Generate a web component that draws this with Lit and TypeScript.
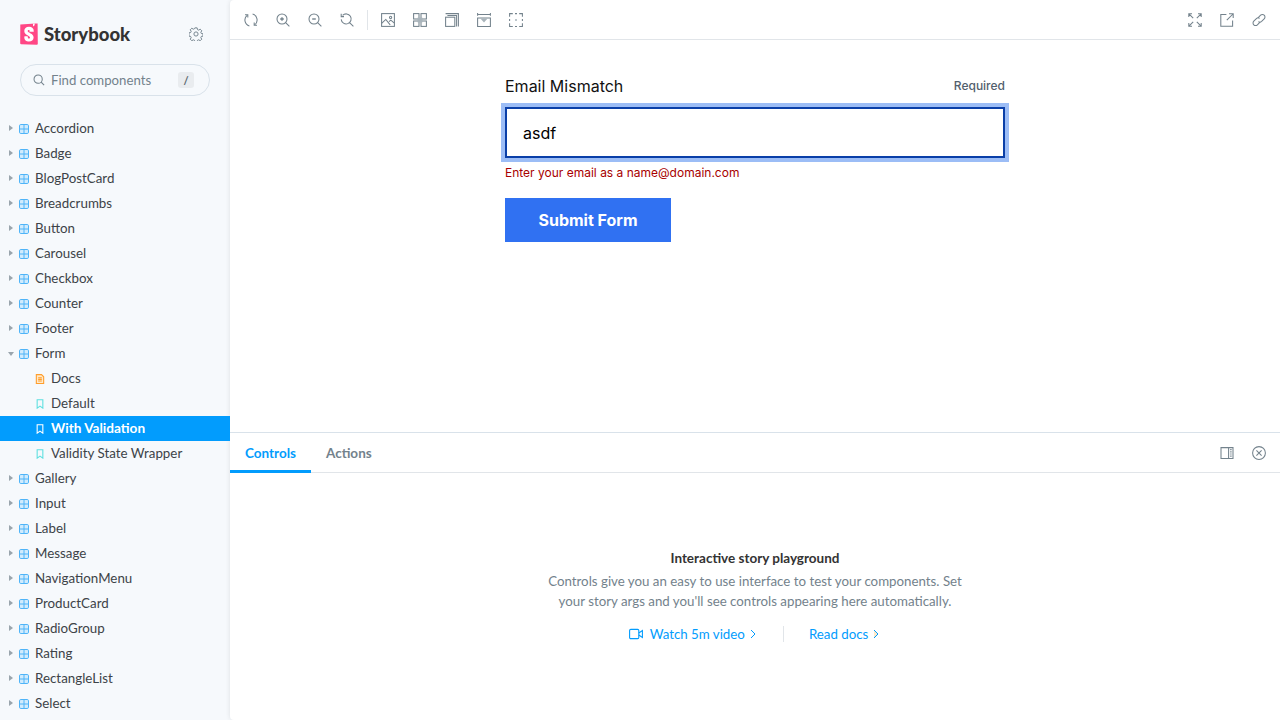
import { LitElement, css, html, svg } from 'lit'
import { customElement } from 'lit/decorators.js'

interface NavItem {
  label: string
  kind: 'component' | 'docs' | 'story'
  open?: boolean
  selected?: boolean
}

const NAV: NavItem[] = [
  { label: 'Accordion', kind: 'component' },
  { label: 'Badge', kind: 'component' },
  { label: 'BlogPostCard', kind: 'component' },
  { label: 'Breadcrumbs', kind: 'component' },
  { label: 'Button', kind: 'component' },
  { label: 'Carousel', kind: 'component' },
  { label: 'Checkbox', kind: 'component' },
  { label: 'Counter', kind: 'component' },
  { label: 'Footer', kind: 'component' },
  { label: 'Form', kind: 'component', open: true },
  { label: 'Docs', kind: 'docs' },
  { label: 'Default', kind: 'story' },
  { label: 'With Validation', kind: 'story', selected: true },
  { label: 'Validity State Wrapper', kind: 'story' },
  { label: 'Gallery', kind: 'component' },
  { label: 'Input', kind: 'component' },
  { label: 'Label', kind: 'component' },
  { label: 'Message', kind: 'component' },
  { label: 'NavigationMenu', kind: 'component' },
  { label: 'ProductCard', kind: 'component' },
  { label: 'RadioGroup', kind: 'component' },
  { label: 'Rating', kind: 'component' },
  { label: 'RectangleList', kind: 'component' },
  { label: 'Select', kind: 'component' },
]

// toolbar and panel icons, all on a 14 unit grid
const ICONS: Record<string, unknown> = {
  sync: svg`<path d="M5.400 12.900A6.100 6.100 0 0 1 3.400 2.100M8.600 1.100A6.100 6.100 0 0 1 10.600 11.900"/><path d="M1 1.800h2.800v2.800M13 12.200h-2.800V9.400"/>`,
  zoomIn: svg`<circle cx="6" cy="6" r="5"/><path d="M9.600 9.600 13.400 13.400"/><path stroke-width="1.400" d="M6 4.200v3.600M4.200 6h3.600"/>`,
  zoomOut: svg`<circle cx="6" cy="6" r="5"/><path d="M9.600 9.600 13.400 13.400"/><path stroke-width="1.400" d="M4.200 6h3.600"/>`,
  zoomReset: svg`<path d="M2.600 2.400A5 5 0 1 1 1.200 6.400M9.800 9.800 13.400 13.400"/><path d="M1.200 .8v2.800H4"/>`,
  image: svg`<rect x=".6" y=".6" width="12.800" height="12.800"/><circle cx="9.600" cy="4.400" r="1.100"/><path d="m.6 10.400 4.200-4 4.400 5.400M8 8.600l1.800-1.400 3.600 3"/>`,
  grid: svg`<rect x=".6" y=".6" width="5.400" height="5.400"/><rect x="8" y=".6" width="5.400" height="5.400"/><rect x=".6" y="8" width="5.400" height="5.400"/><rect x="8" y="8" width="5.400" height="5.400"/><rect class="solid" x="4.600" y="4.600" width="4.800" height="4.800"/>`,
  outline: svg`<rect x=".6" y="4.200" width="9.200" height="9.200"/><path d="M2.400 2.400H11.600V13.400M.6.600H13.400V13.400"/>`,
  measure: svg`<path d="M.6 1.400h12.800M.6 0v2.800M13.400 0v2.800M.6 5h12.800v8.400H.6z"/><path class="solid" d="M3.400 5.600h7.200L7 9.400z"/>`,
  frame: svg`<path d="M.6 3.800V.6h3.200M10.200 .6h3.200v3.200M13.400 10.200v3.200h-3.200M3.800 13.400H.6v-3.200M6 .6h2M6 13.400h2M.6 6v2M13.400 6v2"/><circle class="solid" cx="7" cy="7" r="1"/>`,
  expand: svg`<path d="M1.400 1.400 5.200 5.200M12.600 1.400 8.800 5.200M1.400 12.600 5.200 8.800M12.600 12.600 8.800 8.800M.8 4V.8H4M10 .8h3.200V4M.8 10v3.200H4M10 13.200h3.200V10"/>`,
  external: svg`<path d="M6.400 1.400H.8v11.800h11.800V7.600M6.800 7.200 13 1M9 .8h4.200V5"/>`,
  link: svg`<path d="M6 4.800 8.600 2.200a2.500 2.500 0 0 1 3.600 0 2.500 2.500 0 0 1 0 3.600L9.600 8.400a2.500 2.500 0 0 1-3.200.2"/><path d="M8 9.200 5.400 11.800a2.500 2.500 0 0 1-3.600 0 2.500 2.500 0 0 1 0-3.600l2.600-2.600a2.500 2.500 0 0 1 3.200-.2"/>`,
  sidebar: svg`<path d="M1 1.600h12v10.800H1zM8.600 1.600v10.800"/><path stroke-width="1.200" d="M10.200 3.600h1.400M10.200 5.800h1.400M10.200 8h1.400M10.200 10.200h1.400"/>`,
  close: svg`<circle cx="7" cy="7" r="6.400"/><path d="m4.400 4.400 5.200 5.200M9.600 4.400l-5.200 5.200"/>`,
}

const icon = (name: string) => html`<svg class="tool-icon" viewBox="0 0 14 14">${ICONS[name]}</svg>`

@customElement('app-root')
export class AppRoot extends LitElement {
  private _treeIcon(kind: NavItem['kind']) {
    if (kind === 'component') {
      return html`<svg class="node-icon component" viewBox="0 0 12 12">
        <rect x=".6" y=".6" width="10.800" height="10.800" rx="1.600" />
        <path d="M6 .6v10.800M.6 6h10.800" />
      </svg>`
    }
    if (kind === 'docs') {
      return html`<svg class="node-icon docs" viewBox="0 0 12 12">
        <path d="M1.600 .7h6.200l2.600 2.600v8H1.600z" />
        <path d="M3.800 4.400h4.400M3.800 6.400h4.400M3.800 8.400h4.400" />
      </svg>`
    }
    return html`<svg class="node-icon story" viewBox="0 0 12 12">
      <path d="M2.600 .8h6.800v10.200L6 8.600l-3.400 2.400z" />
    </svg>`
  }

  private _row(item: NavItem) {
    const child = item.kind !== 'component'
    return html`<div class="row ${child ? 'child' : ''} ${item.selected ? 'selected' : ''}">
      ${child ? '' : html`<span class="caret ${item.open ? 'open' : ''}"></span>`}
      ${this._treeIcon(item.kind)}
      <span class="row-label">${item.label}</span>
    </div>`
  }

  render() {
    return html`
      <aside class="sidebar">
        <div class="brand">
          <svg class="logo" viewBox="0 0 18 22">
            <path fill="#ff4785" d="M.3 1.400 15.600.4l2 0 .2 20.400a1 1 0 0 1-1 1L1.200 21.200a1 1 0 0 1-1-1z" />
            <path fill="#fff" d="M13 .7 13.100 3.400l1.500-1.100.1-1.700zM10.200 8.500c0 .5 3.200.3 3.600-.1 0-3-1.800-4.600-4.800-4.600-3 0-4.700 1.700-4.700 4.100 0 4.300 5.700 4.400 5.700 6.700 0 .7-.3 1-1 1-.9 0-1.200-.5-1.200-2.100 0-.4-3.200-.5-3.500 0-.2 3.900 2.100 5 4.700 5 2.500 0 4.600-1.300 4.600-3.900 0-4.400-5.900-4.300-5.900-6.500 0-.9.700-1 1-1 .5 0 1.100.1 1 2.500z" />
          </svg>
          <span class="wordmark">Storybook</span>
          <svg class="gear" viewBox="0 0 16 16">
            <circle cx="8" cy="8" r="2.400" />
            <path d="M6.700 1h2.600l.4 2 1.400.6 1.700-1.100 1.800 1.800-1.100 1.700.6 1.400 2 .4v2.600l-2 .4-.6 1.400 1.100 1.700-1.800 1.800-1.700-1.100-1.400.6-.4 2H6.700l-.4-2-1.400-.6-1.700 1.100-1.800-1.800 1.100-1.700-.6-1.400-2-.4V6.700l2-.4.6-1.400L1.400 3.200l1.800-1.800 1.700 1.100 1.400-.6z" />
          </svg>
        </div>
        <div class="search">
          <svg class="search-icon" viewBox="0 0 14 14">
            <circle cx="6" cy="6" r="4.800" />
            <path d="M9.500 9.500 13 13" />
          </svg>
          <span class="search-text">Find components</span>
          <span class="key">/</span>
        </div>
        <nav class="tree">${NAV.map((item) => this._row(item))}</nav>
      </aside>

      <main class="main">
        <header class="toolbar">
          <div class="tools">
            ${['sync', 'zoomIn', 'zoomOut', 'zoomReset'].map(icon)}
            <span class="divider"></span>
            ${['image', 'grid', 'outline', 'measure', 'frame'].map(icon)}
          </div>
          <div class="tools">${['expand', 'external', 'link'].map(icon)}</div>
        </header>

        <section class="canvas">
          <form class="story-form">
            <div class="field-head">
              <label>Email Mismatch</label>
              <span class="required">Required</span>
            </div>
            <div class="input">asdf</div>
            <div class="error">Enter your email as a name@domain.com</div>
            <div class="submit">Submit Form</div>
          </form>
        </section>

        <section class="panel">
          <div class="tabs">
            <span class="tab active">Controls</span>
            <span class="tab">Actions</span>
            <div class="tabs-right">${['sidebar', 'close'].map(icon)}</div>
          </div>
          <div class="empty">
            <strong>Interactive story playground</strong>
            <p>
              Controls give you an easy to use interface to test your components. Set<br />
              your story args and you'll see controls appearing here automatically.
            </p>
            <div class="links">
              <span class="link video">
                <svg class="video-icon" viewBox="0 0 14 12">
                  <rect x=".6" y="1.400" width="9.200" height="9.200" rx="1.200" />
                  <path d="m9.800 5 3.600-2.400v6.800L9.800 7" />
                </svg>
                Watch 5m video
                <svg class="chevron" viewBox="0 0 6 10"><path d="m1 1 4 4-4 4" /></svg>
              </span>
              <span class="links-sep"></span>
              <span class="link docs">
                Read docs
                <svg class="chevron" viewBox="0 0 6 10"><path d="m1 1 4 4-4 4" /></svg>
              </span>
            </div>
          </div>
        </section>
      </main>
    `
  }

  static styles = css`
    :host {
      display: grid;
      grid-template-columns: 230px 1fr;
      width: 1280px;
      height: 720px;
      overflow: hidden;
      background: #f6f9fc;
      font-family: Lato, 'Open Sans', sans-serif;
      color: #333;
    }

    .sidebar {
      display: flex;
      flex-direction: column;
      min-width: 0;
      overflow: hidden;
    }

    .brand {
      display: flex;
      align-items: center;
      height: 22px;
      margin: 23px 27px 0 20px;
    }

    .logo {
      width: 18px;
      height: 22px;
      flex: none;
    }

    .wordmark {
      margin-left: 6px;
      font-size: 18.500px;
      font-weight: 900;
      color: #333;
    }

    .gear {
      width: 14px;
      height: 14px;
      margin-left: auto;
      fill: none;
      stroke: #73828c;
      stroke-width: 1.100;
    }

    .search {
      display: flex;
      align-items: center;
      box-sizing: border-box;
      height: 32px;
      margin: 19px 20px 0;
      padding: 0 15px 0 12px;
      border: 1px solid #d9e2ea;
      border-radius: 16px;
    }

    .search-icon {
      width: 12px;
      height: 12px;
      fill: none;
      stroke: #73828c;
      stroke-width: 1.200;
    }

    .search-text {
      margin-left: 6px;
      font-size: 13.200px;
      color: #73828c;
    }

    .key {
      display: grid;
      place-items: center;
      width: 16px;
      height: 16px;
      margin-left: auto;
      border-radius: 3px;
      background: #e9ecef;
      font-size: 11px;
      font-weight: 700;
      color: #5c6870;
    }

    .tree {
      margin-top: 20px;
    }

    .row {
      display: flex;
      align-items: center;
      position: relative;
      height: 25px;
      padding-left: 19px;
      font-size: 13.350px;
      color: #3d4348;
    }

    .row.child {
      padding-left: 35px;
    }

    .row.selected {
      background: #029cfd;
      color: #fff;
      font-size: 13.600px;
      font-weight: 700;
    }

    .caret {
      position: absolute;
      left: 9px;
      top: 9px;
      width: 0;
      height: 0;
      border-style: solid;
      border-width: 3.500px 0 3.500px 4px;
      border-color: transparent transparent transparent #9aa5ad;
    }

    .caret.open {
      left: 8px;
      top: 11px;
      border-width: 4px 3.500px 0;
      border-color: #9aa5ad transparent transparent;
    }

    .node-icon {
      width: 10px;
      height: 10px;
      flex: none;
      fill: none;
    }

    .component {
      stroke: #4fb4f8;
      stroke-width: 1.200;
    }

    .component rect {
      fill: #d0ebfd;
    }

    .docs {
      stroke: #ff9e2c;
      stroke-width: 1.300;
    }

    .docs path:first-child {
      fill: #ffe9c9;
    }

    .story {
      stroke: #5fe0e0;
      stroke-width: 1.300;
    }

    .selected .story {
      stroke: #fff;
    }

    .row-label {
      margin-left: 6px;
      padding-bottom: 2px;
      white-space: nowrap;
    }

    .main {
      display: flex;
      flex-direction: column;
      min-width: 0;
      background: #fff;
      border-radius: 4px 0 0 4px;
      box-shadow: 0 0 5px rgba(0, 0, 0, 0.1);
    }

    .toolbar {
      display: flex;
      align-items: center;
      justify-content: space-between;
      box-sizing: border-box;
      flex: none;
      height: 40px;
      padding: 0 14px;
      border-bottom: 1px solid #e1e5e9;
    }

    .tools {
      display: flex;
      align-items: center;
      gap: 18px;
    }

    .tool-icon {
      width: 14px;
      height: 14px;
      flex: none;
      fill: none;
      stroke: #73828c;
      stroke-width: 1.050;
    }

    .tool-icon .solid {
      fill: #a9b4bb;
      stroke: none;
    }

    .divider {
      width: 1px;
      height: 20px;
      margin: 0 -5px;
      background: #e1e5e9;
    }

    .canvas {
      flex: none;
      display: flex;
      justify-content: center;
      height: 392px;
      font-family: Inter, sans-serif;
      color: #111;
    }

    .story-form {
      width: 500px;
      margin-top: 34px;
    }

    .field-head {
      display: flex;
      align-items: center;
      justify-content: space-between;
      height: 24px;
      font-size: 16px;
    }

    .required {
      margin-top: -2px;
      font-size: 12px;
      font-weight: 500;
      color: #52606d;
    }

    .input {
      box-sizing: border-box;
      display: flex;
      align-items: center;
      height: 51px;
      margin-top: 9px;
      padding-left: 16px;
      border: 2px solid #0a3fa8;
      outline: 4px solid #9cbdf6;
      background: #fff;
      font-size: 16px;
      color: #000;
    }

    .error {
      margin-top: 8px;
      font-size: 12px;
      line-height: 14px;
      color: #a80000;
    }

    .submit {
      display: grid;
      place-items: center;
      width: 166px;
      height: 44px;
      margin-top: 18px;
      background: #3071f2;
      color: #fff;
      font-size: 16px;
      font-weight: 700;
    }

    .panel {
      flex: 1;
      min-height: 0;
      border-top: 1px solid #d9e2ea;
    }

    .tabs {
      display: flex;
      align-items: stretch;
      box-sizing: border-box;
      height: 40px;
      border-bottom: 1px solid #e1e5e9;
    }

    .tab {
      display: flex;
      align-items: center;
      padding: 3px 15px 0;
      margin-bottom: -1px;
      font-size: 13.500px;
      font-weight: 700;
      color: #73828c;
      border-bottom: 3px solid transparent;
    }

    .tab.active {
      color: #029cfd;
      border-bottom-color: #029cfd;
    }

    .tabs-right {
      display: flex;
      align-items: center;
      gap: 18px;
      margin-left: auto;
      padding-right: 14px;
    }

    .empty {
      display: flex;
      flex-direction: column;
      align-items: center;
      padding-top: 76px;
      font-size: 13.300px;
      text-align: center;
    }

    .empty strong {
      font-size: 13.500px;
      font-weight: 700;
      line-height: 18px;
      color: #333;
    }

    .empty p {
      margin: 4px 0 0;
      line-height: 20px;
      color: #73828c;
    }

    .links {
      display: flex;
      align-items: center;
      height: 16px;
      margin-top: 15px;
    }

    .link {
      display: flex;
      align-items: center;
      color: #029cfd;
    }

    .link.docs {
      margin-right: 2px;
    }

    .links-sep {
      width: 1px;
      height: 16px;
      margin: 0 25px 0 27px;
      background: #e1e5e9;
    }

    .video-icon {
      width: 14px;
      height: 12px;
      margin-right: 7px;
      fill: none;
      stroke: #029cfd;
      stroke-width: 1.100;
    }

    .chevron {
      width: 6px;
      height: 10px;
      margin-left: 5px;
      fill: none;
      stroke: #029cfd;
      stroke-width: 1;
    }
  `
}
